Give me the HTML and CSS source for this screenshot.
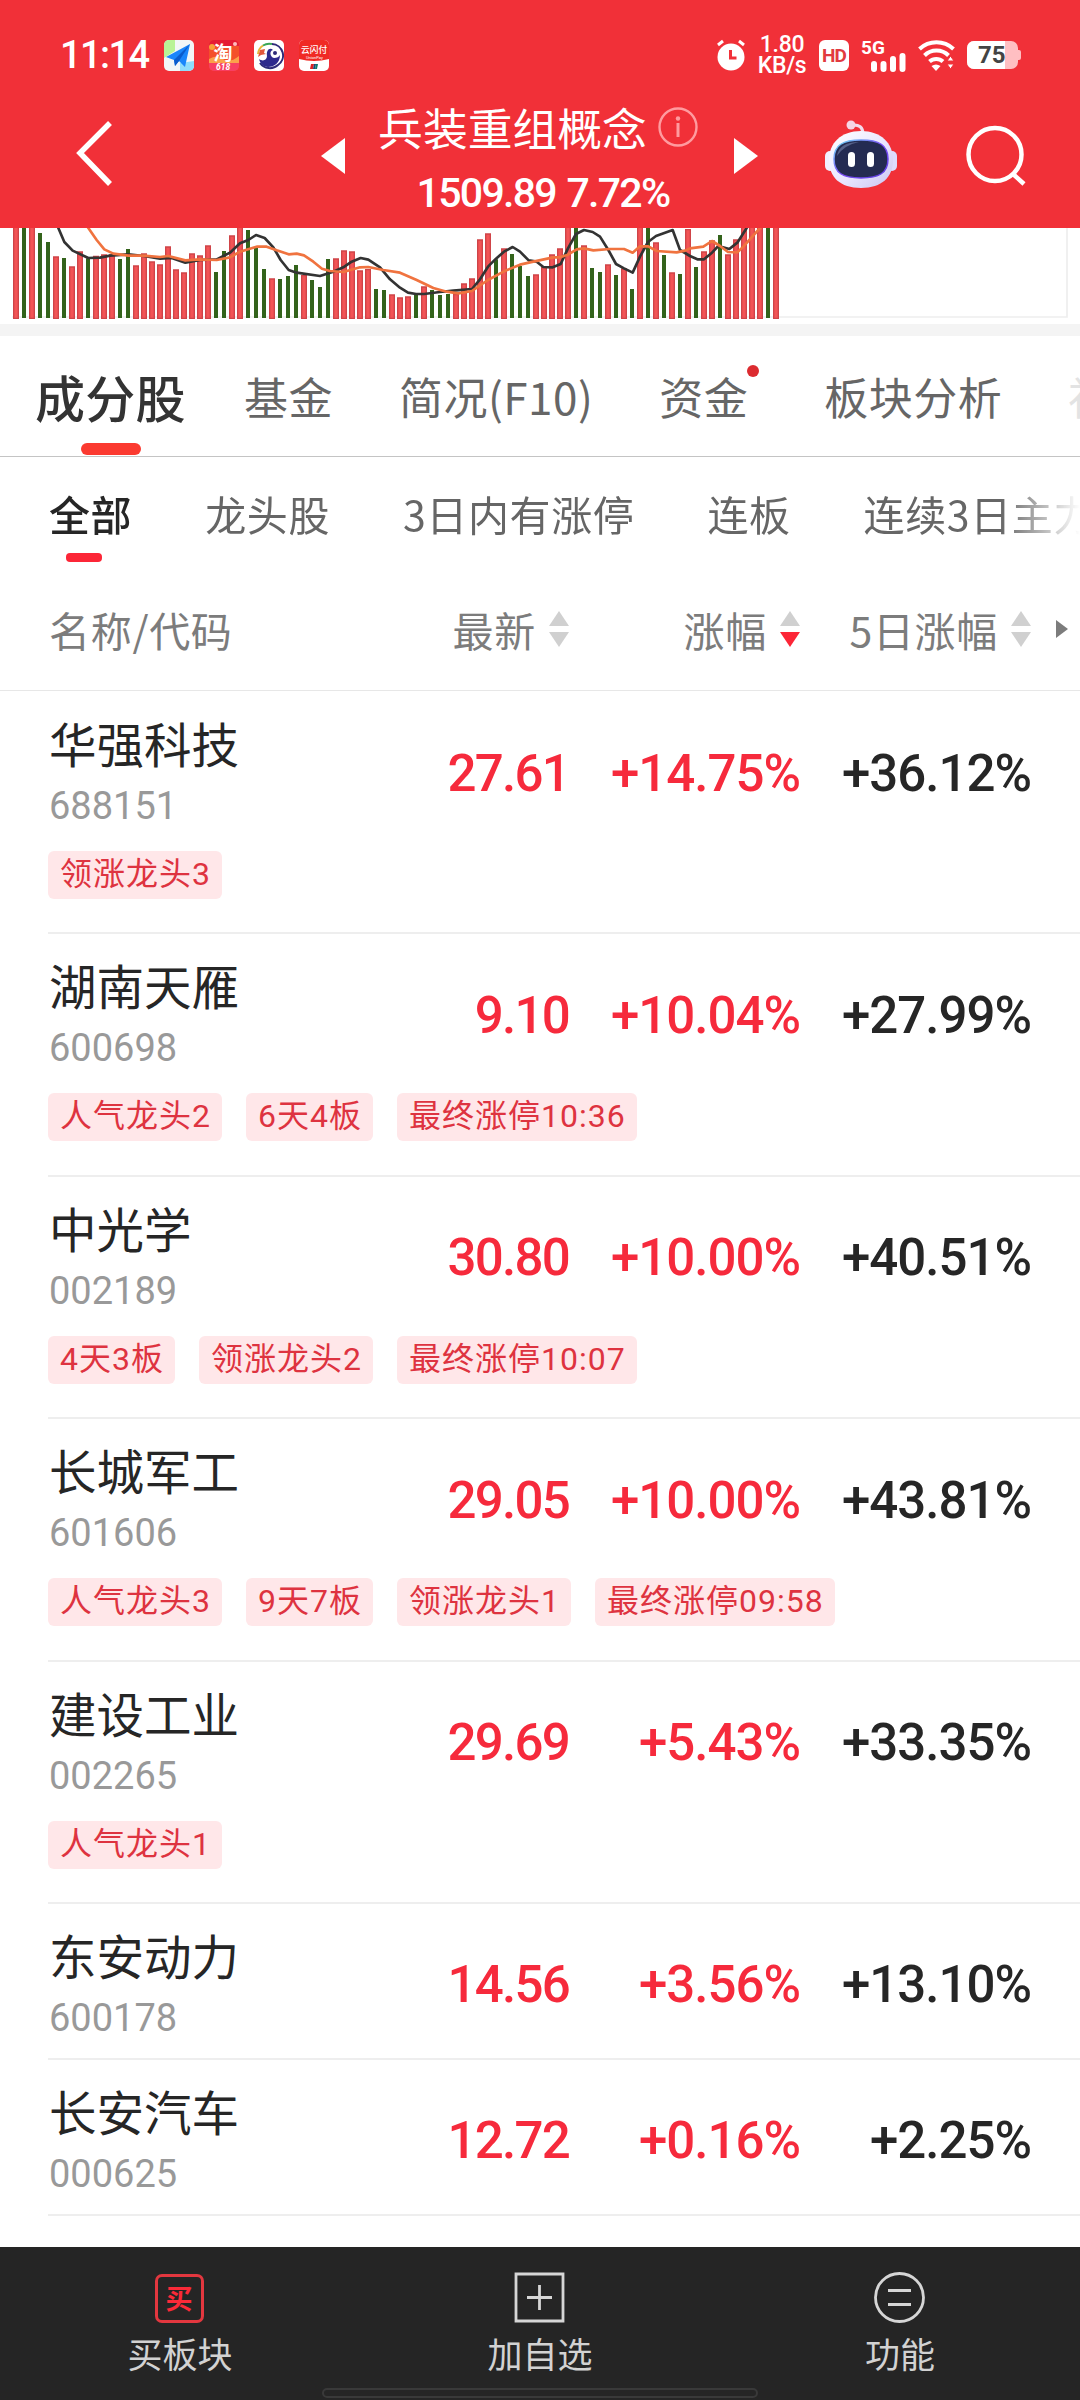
FILE: index.html
```
<!DOCTYPE html>
<html lang="zh-CN">
<head>
<meta charset="utf-8">
<title>兵装重组概念</title>
<link rel="stylesheet" href="styles.css">
</head>
<body>
<header class="top">
  <div class="status">
    <span class="clock">11:14</span>
    <svg class="app" viewBox="0 0 30 31"><defs><clipPath id="r"><rect width="30" height="31" rx="5"/></clipPath></defs><g clip-path="url(#r)"><path fill="#f2f6f7" d="M0 0h30v31H0z"/><path fill="#b9f396" d="M0 0h11v11L0 18z"/><path fill="#8fdcfb" d="M16 31V23l14-2v10z"/><path fill="#1a86fb" d="M26 4L2 17l8 3 1 6 4-5 6 6z"/><path fill="#0b5ccc" d="M26 4L10 20l1 6 4-5z"/></g></svg>
    <svg class="app" viewBox="0 0 30 31"><g clip-path="url(#r)"><path fill="#f4502a" d="M0 0h30v31H0z"/><path fill="#e51c35" d="M0 0h30v6H0z"/><circle cx="3" cy="7" r="3" fill="#f9a13a"/><circle cx="26" cy="4" r="2" fill="#fbb"/><path d="M0 19q8-5 14 0t16-3v7H0z" fill="#fba04a"/><path fill="#f83e62" d="M0 23h30v8H0z"/><text class="t-tao" x="4.500" y="20">淘</text><text class="t-618" x="7" y="30">618</text></g></svg>
    <svg class="app" viewBox="0 0 30 31"><rect width="30" height="31" rx="5" fill="#fff"/><g fill="none" stroke-width="2"><path d="M4 14a11.500 11.500 0 0 1 5-8.500" stroke="#e8b53a"/><path d="M9 5.500a11.500 11.500 0 0 1 9-1.500" stroke="#3aa655"/><path d="M18 4a11.500 11.500 0 0 1 6 21 12 12 0 0 1-18-2" stroke="#2e2a78"/></g><path d="M5 19c4 3 8 1 8-3-1-6 3-9 6-6-4 1-3 7 1 8 3 0 5-1 6-3 0 8-6 12-12 12-5 0-8-4-9-8z" fill="#2e2a8c"/><path d="M4 17l2-7 5-1-1 4 2 1-5 1z" fill="#e2573a"/><circle cx="21" cy="13" r="2" fill="#2e2a78"/></svg>
    <svg class="app" viewBox="0 0 30 31"><g clip-path="url(#r)"><path fill="#fff" d="M0 0h30v31H0z"/><path fill="#f02a24" d="M0 0h30v19q-15 4-30 0z"/><text class="t-pay" x="2" y="13">云闪付</text><text class="t-uni" x="7" y="18.500">UnionPay</text><path fill="#d22" d="M12 24h3l-1 5h-3z"/><path fill="#1a4a7a" d="M15 24h2l-1 5h-2z"/><path fill="#0a7a6a" d="M17 24h2l-1 5h-2z"/></g></svg>
    <div class="sys">
      <svg width="30" height="32" viewBox="0 0 30 32"><circle cx="15" cy="18" r="13.500" fill="#fff"/><path d="M2 6l5-4M28 6l-5-4" stroke="#fff" stroke-width="3"/><path d="M14.500 11v8h6" fill="none" stroke="#f13038" stroke-width="3"/></svg>
      <span class="speed"><b>1.80</b><b>KB/s</b></span>
      <span class="hd">HD</span>
      <svg class="sig" width="46" height="34" viewBox="0 0 46 34"><text class="t-5g" x="0" y="16">5G</text><path d="M13 26v5M22.500 26v5M32 21v10M41.500 18v13" stroke="#fff" stroke-width="6" stroke-linecap="round"/></svg>
      <svg class="wifi" width="38" height="31" viewBox="0 0 38 31"><g fill="none" stroke="#fff" stroke-width="4"><path d="M1.500 9a25 25 0 0 1 34 0"/><path d="M6.500 15.500a17 17 0 0 1 24 0"/><path d="M11.500 21.500a10 10 0 0 1 13.500 0"/></g><path d="M13.500 26q4.500-3 9 0l-4.500 5z" fill="#fff"/><path d="M29 21l3.500-5 3.500 5zM29 24h7l-3.500 5z" fill="#fff" stroke="#f13038"/></svg>
      <span class="battery"><i class="charge">75</i></span>
    </div>
  </div>
  <div class="bar">
    <svg class="back" width="40" height="68" viewBox="0 0 40 68"><path d="M35 4L5 34l30 31" fill="none" stroke="#fff" stroke-width="5.500"/></svg>
    <svg class="prev" width="24" height="36" viewBox="0 0 24 36"><path d="M24 0v36L0 18z" fill="#fff"/></svg>
    <div class="heading">
      <div class="title">兵装重组概念<svg width="40" height="40" viewBox="0 0 40 40"><g fill="none" stroke="#ff9b9f" stroke-width="2.400"><circle cx="20" cy="20" r="18.500"/><path d="M20 16v14" stroke-width="3"/></g><circle cx="20" cy="11.500" r="2.200" fill="#ff9b9f"/></svg></div>
      <div class="index">1509.89 7.72%</div>
    </div>
    <svg class="next" width="24" height="36" viewBox="0 0 24 36"><path d="M0 0v36l24-18z" fill="#fff"/></svg>
    <svg class="bot" width="72" height="68" viewBox="0 0 72 68"><defs><linearGradient id="shell" x1="0" y1="0" x2="1" y2="1"><stop offset="0" stop-color="#fff"/><stop offset=".55" stop-color="#e9e6ff"/><stop offset="1" stop-color="#c9c4f2"/></linearGradient><linearGradient id="rim" x1="0" y1="0" x2="1" y2="1"><stop offset="0" stop-color="#6fe3f5"/><stop offset=".5" stop-color="#7a4df5"/><stop offset="1" stop-color="#5a3be0"/></linearGradient></defs><path d="M27 5q11-1 11 9" fill="none" stroke="#f3dcec" stroke-width="3"/><circle cx="26" cy="5" r="4.500" fill="#f6d5e4"/><rect x="0" y="31" width="10" height="20" rx="5" fill="#f1efff"/><rect x="62" y="31" width="10" height="20" rx="5" fill="#dedcff"/><path d="M36 11c20 0 32 12 32 29S57 68 36 68 4 57 4 40 16 11 36 11z" fill="url(#shell)"/><path d="M36 20c18 0 27 5 27 19s-9 19-27 19S9 53 9 39s9-19 27-19z" fill="#242b52" stroke="url(#rim)" stroke-width="1.500"/><path d="M12 36q2-14 22-14-15 3-22 14z" fill="#566088"/><rect x="23" y="32" width="7" height="15" rx="3.500" fill="#fff"/><rect x="42" y="32" width="7" height="15" rx="3.500" fill="#fff"/></svg>
    <svg class="search" width="62" height="62" viewBox="0 0 62 62"><g fill="none" stroke="#fff" stroke-width="4.500"><circle cx="29" cy="29.500" r="26.500"/><path d="M47 49l11 10"/></g></svg>
  </div>
</header>

<svg class="chart" viewBox="0 0 3240 288"><path d="M36 267H3201V0" class="frame"/><path id="up-edge" class="up-edge"/><path id="up" class="up"/><path id="down" class="down"/><path class="ma5" d="M170-10L175 0 193 42 218 68 265 90 300 89 330 83 385 79 432 84 480 92 515 90 556 104 600 96 650 94 690 74 720 46 745 36 768 21 794 30 820 58 842 96 866 126 890 134 960 144 1000 131 1030 118 1055 101 1082 90 1105 95 1140 118 1170 154 1200 179 1224 194 1248 198 1272 198 1320 192 1360 188 1416 183 1440 154 1464 116 1488 92 1512 71 1538 57 1560 71 1586 97 1610 101 1630 117 1658 118 1682 108 1704 61 1728 18 1752 6 1778 12 1800 26 1825 66 1848 108 1872 121 1898 134 1920 86 1944 42 1968 24 2018 6 2040 66 2070 84 2092 94 2112 94 2136 74 2155 54 2188 63 2212 44 2240 0 2244-8"/><path class="ma10" d="M258-10L265 0 290 36 313 64 340 77 385 83 430 83 480 87 505 84 556 97 600 94 650 96 690 88 720 71 770 56 800 56 830 67 866 79 890 77 912 82 940 101 966 122 990 129 1030 132 1080 118 1105 117 1150 126 1200 134 1250 156 1300 180 1340 191 1375 196 1416 189 1440 172 1464 156 1512 130 1560 110 1600 101 1660 88 1680 88 1704 80 1730 64 1752 61 1780 67 1830 63 1872 63 1898 74 1920 55 1945 55 1970 69 2030 73 2055 68 2070 61 2110 56 2136 39 2160 54 2184 72 2212 73 2230 56 2280 0 2290-10"/></svg>

<nav class="tabs"><span class="tab on">成分股</span><span class="tab">基金</span><span class="tab">简况(F10)</span><span class="tab dot">资金</span><span class="tab">板块分析</span><span class="tab cut">社区</span></nav>
<nav class="filters"><span class="on">全部</span><span>龙头股</span><span>3日内有涨停</span><span>连板</span><span>连续3日主力</span></nav>

<div class="cols head">
  <span>名称/代码</span>
  <span class="r">最新<svg class="sort" viewBox="0 0 20 36"><path d="M0 15L10 0l10 15z"/><path d="M0 21h20L10 36z"/></svg></span>
  <span class="r">涨幅<svg class="sort" viewBox="0 0 20 36"><path d="M0 15L10 0l10 15z"/><path class="hot" d="M0 21h20L10 36z"/></svg></span>
  <span class="r">5日涨幅<svg class="sort" viewBox="0 0 20 36"><path d="M0 15L10 0l10 15z"/><path d="M0 21h20L10 36z"/></svg></span>
  <svg class="more" viewBox="0 0 12 18"><path d="M0 0v18l12-9z"/></svg>
</div>

<main class="list">
  <section class="row"><div class="cols"><div><div class="name">华强科技</div><div class="code">688151</div></div><b class="up-n last">27.61</b><b class="up-n">+14.75%</b><b>+36.12%</b></div><div class="tags"><span>领涨龙头3</span></div></section>
  <section class="row"><div class="cols"><div><div class="name">湖南天雁</div><div class="code">600698</div></div><b class="up-n last">9.10</b><b class="up-n">+10.04%</b><b>+27.99%</b></div><div class="tags"><span>人气龙头2</span><span>6天4板</span><span>最终涨停10:36</span></div></section>
  <section class="row"><div class="cols"><div><div class="name">中光学</div><div class="code">002189</div></div><b class="up-n last">30.80</b><b class="up-n">+10.00%</b><b>+40.51%</b></div><div class="tags"><span>4天3板</span><span>领涨龙头2</span><span>最终涨停10:07</span></div></section>
  <section class="row"><div class="cols"><div><div class="name">长城军工</div><div class="code">601606</div></div><b class="up-n last">29.05</b><b class="up-n">+10.00%</b><b>+43.81%</b></div><div class="tags"><span>人气龙头3</span><span>9天7板</span><span>领涨龙头1</span><span>最终涨停09:58</span></div></section>
  <section class="row"><div class="cols"><div><div class="name">建设工业</div><div class="code">002265</div></div><b class="up-n last">29.69</b><b class="up-n">+5.43%</b><b>+33.35%</b></div><div class="tags"><span>人气龙头1</span></div></section>
  <section class="row short"><div class="cols"><div><div class="name">东安动力</div><div class="code">600178</div></div><b class="up-n last">14.56</b><b class="up-n">+3.56%</b><b>+13.10%</b></div></section>
  <section class="row short"><div class="cols"><div><div class="name">长安汽车</div><div class="code">000625</div></div><b class="up-n last">12.72</b><b class="up-n">+0.16%</b><b>+2.25%</b></div></section>
</main>

<footer class="dock">
  <div class="act"><span class="buy">买</span><span>买板块</span></div>
  <div class="act"><svg width="52" height="52" viewBox="0 0 52 52"><g fill="none" stroke="#d6d6d6" stroke-width="2.800"><path d="M2 3h47v47H2zM25.500 14v25M13 26.500h25"/></g></svg><span>加自选</span></div>
  <div class="act"><svg width="52" height="52" viewBox="0 0 52 52"><g fill="none" stroke="#d6d6d6" stroke-width="2.800"><circle cx="25.500" cy="26.500" r="24"/><path d="M14 19.500h23M14 33.500h23"/></g></svg><span>功能</span></div>
  <i class="pill"></i>
</footer>
<script src="chart.js"></script>
</body>
</html>
```
FILE: styles.css
```
* { box-sizing: border-box; }
body { margin: 0; width: 1080px; height: 2400px; overflow: hidden; background: #fff; color: #262626; font-family: "Noto Sans CJK SC", sans-serif; display: flex; flex-direction: column; }
svg { display: block; flex: none; }
i { font-style: normal; }
.top { height: 228px; flex: none; background: #f13038; color: #fff; }

.status { height: 108px; padding: 2px 62px 0 60px; display: flex; align-items: center; }
.clock { width: 104px; font: 500 38px/44px Roboto, sans-serif; letter-spacing: -1.6px; white-space: nowrap; }
.app { width: 30px; height: 31px; margin-right: 15px; }
.t-tao { font: 700 19px "Noto Sans CJK SC", sans-serif; fill: #fff; }
.t-618 { font: italic 700 8.500px Roboto, sans-serif; fill: #fff; }
.t-pay { font: 500 8.700px "Noto Sans CJK SC", sans-serif; fill: #fff; }
.t-uni { font: 4px Roboto, sans-serif; fill: #fff; }
.sys { margin-left: auto; display: flex; align-items: center; }
.speed { width: 48px; margin-left: 12px; font: 500 23px/21px Roboto, sans-serif; letter-spacing: -.3px; display: flex; flex-direction: column; align-items: center; }
.speed b { font-weight: 500; }
.hd { width: 30px; height: 31px; margin-left: 13px; border-radius: 6px; background: #fff; color: #e23a40; font: 700 19px/31px Roboto, sans-serif; text-align: center; letter-spacing: -1px; }
.sig { margin-left: 12px; }
.t-5g { font: 700 19px Roboto, sans-serif; fill: #fff; }
.wifi { margin: 0 11px 0 11px; }
.battery { position: relative; width: 51px; height: 28px; border-radius: 7px; background: #ffbfc2; color: #444; }
.battery::after { content: ""; position: absolute; right: -3px; top: 9px; width: 3px; height: 10px; border-radius: 0 2px 2px 0; background: #ffbfc2; }
.charge { display: block; width: 38px; height: 28px; padding-left: 11px; border-radius: 7px 0 0 7px; background: #fff; font: 700 24px/28px Roboto, sans-serif; }

.bar { height: 120px; display: flex; align-items: flex-start; }
.back { margin: 11px 0 0 75px; }
.prev { margin: 30px 0 0 206px; }
.heading { width: 396px; display: flex; flex-direction: column; align-items: center; }
.title { height: 44px; display: flex; align-items: center; gap: 11px; font-size: 44.800px; line-height: 44px; white-space: nowrap; transform: translate(-5px, -3px); }
.index { margin-top: 17px; font: 500 41px/48px Roboto, sans-serif; letter-spacing: -1.700px; word-spacing: 2px; white-space: nowrap; }
.next { margin-top: 30px; margin-left: -7px; }
.bot { margin: 12px 0 0 67px; }
.search { margin: 17px 0 0 69px; }

.chart { width: 1080px; height: 96px; }
.frame { fill: none; stroke: #eee; stroke-width: 5; }
.up-edge { fill: none; stroke: #cf4448; stroke-width: 18; }
.up { fill: none; stroke: #f25456; stroke-width: 10; }
.down { fill: none; stroke: #33631b; stroke-width: 12; }
.ma5, .ma10 { fill: none; stroke-width: 8; stroke-linejoin: round; }
.ma5 { stroke: #333; }
.ma10 { stroke: #f0733f; }

.tabs { height: 133px; flex: none; border-top: 12px solid #f4f4f4; border-bottom: 1px solid #c4c4c4; padding-left: 35px; display: flex; align-items: center; gap: 66px; font-size: 44px; line-height: 60px; letter-spacing: .5px; color: #666; white-space: nowrap; overflow: hidden; }
.tab { position: relative; flex: none; }
.tab.on { margin-right: -8px; font-size: 50px; letter-spacing: .3px; color: #333; font-weight: 500; }
.tab.on::after { content: ""; position: absolute; left: 46px; top: 77px; width: 60px; height: 12px; border-radius: 6px; background: #fb3a30; }
.tab.dot { margin-right: 10px; }
.tab.dot::after { content: ""; position: absolute; left: 88px; top: -1px; width: 12px; height: 12px; border-radius: 50%; background: #dc2b30; }
.tab.cut { color: #e3e3e3; }

.filters { height: 122px; flex: none; padding: 0 0 10px 49px; display: flex; align-items: center; gap: 73px; font-size: 41px; line-height: 56px; letter-spacing: .6px; color: #666; white-space: nowrap; overflow: hidden; -webkit-mask-image: linear-gradient(90deg, #000 1000px, transparent 1080px); mask-image: linear-gradient(90deg, #000 1000px, transparent 1080px); }
.filters span { flex: none; }
.filters .on { position: relative; color: #262626; font-weight: 500; }
.filters .on::after { content: ""; position: absolute; left: 17px; top: 68px; width: 36px; height: 9px; border-radius: 4px; background: #fc2637; }

.cols { display: grid; grid-template-columns: 321px 199px 231px 231px 1fr; align-items: center; }
.head { height: 112px; flex: none; padding: 0 0 12px 49px; border-bottom: 1px solid #e7e7e7; font-size: 41px; letter-spacing: .7px; color: #7c7c7c; white-space: nowrap; }
.r { display: flex; align-items: center; justify-content: flex-end; gap: 13px; }
.sort { width: 20px; height: 36px; fill: #d0d0d0; }
.hot { fill: #fc2637; }
.more { width: 12px; height: 18px; margin-left: 25px; fill: #7c7c7c; }

.list { flex: 1; padding-top: 1px; }
.row { height: 242.400px; margin-left: 48px; padding: 23px 0 0 1px; border-bottom: 2px solid #eee; }
.row.short { height: 156px; }
.name { font-size: 47.500px; line-height: 56px; white-space: nowrap; }
.code { margin-top: 13px; font: 38px/44px Roboto, sans-serif; color: #999; }
.row b { padding-top: 4px; font: 500 51px/60px Roboto, sans-serif; letter-spacing: -1px; text-align: right; white-space: nowrap; }
.row .up-n { color: #f62a3c; }
.row .last { letter-spacing: -1.700px; }
.tags { display: flex; gap: 24px; margin: 23px 0 0 -1px; }
.tags span { height: 48px; padding: 0 11px 0 12px; border-radius: 6px; background: #ffe7e9; color: #de3340; font: 32px/46px Roboto, "Noto Sans CJK SC", sans-serif; letter-spacing: 1px; white-space: nowrap; }

.dock { position: relative; height: 153px; flex: none; background: #252525; color: #d2d2d2; display: grid; grid-template-columns: repeat(3, 1fr); font-size: 35px; }
.act { display: flex; flex-direction: column; align-items: center; padding-top: 24px; line-height: 50px; gap: 5px; }
.buy { width: 49px; height: 49px; margin: 3px 2px 0 0; border: 3px solid #e3373f; border-radius: 7px; color: #fa2a38; font-size: 27px; font-weight: 700; line-height: 41px; text-align: center; }
.pill { position: absolute; left: 322px; bottom: 2px; width: 436px; height: 10px; border: 2px solid #393939; border-radius: 5px; }
```
FILE: chart.js
```
// Volume bars: colour (r up, g down) and top edge, in chart units; the bars are 24 units apart.
const bars = "r0 g0 r0 g39 g66 r109 g114 r139 r94 g115 r107 r103 r103 g117 g87 r136 r100 r124 r133 r79 r148 r157 r100 r106 r76 g156 g93 r46 r0 g30 g84 g147 r175 g177 g168 g135 r165 g180 g201 g117 r115 r91 r94 r151 r147 g207 g210 r223 r232 r229 g225 r199 g210 g225 g222 r222 r190 r175 r58 r40 g118 r85 g102 g138 g168 r163 r140 r103 r85 r0 g0 r76 g144 g156 r133 g165 r145 g207 r0 g0 r67 g105 r157 g162 r27 g141 r94 r61 g45 r103 r58 r0 r0 r0 g0 r0".split(" ");
let edge = "", up = "", down = "";
bars.forEach((bar, i) => {
  const x = 48 + 24 * i;
  const top = Math.max(-5, bar.slice(1) - 24);
  if (bar[0] === "r") {
    edge += `M${x} ${top}V273`;
    up += `M${x} ${top + 4}V269`;
  } else {
    down += `M${x} ${top}V270`;
  }
});
document.getElementById("up-edge").setAttribute("d", edge);
document.getElementById("up").setAttribute("d", up);
document.getElementById("down").setAttribute("d", down);
```
